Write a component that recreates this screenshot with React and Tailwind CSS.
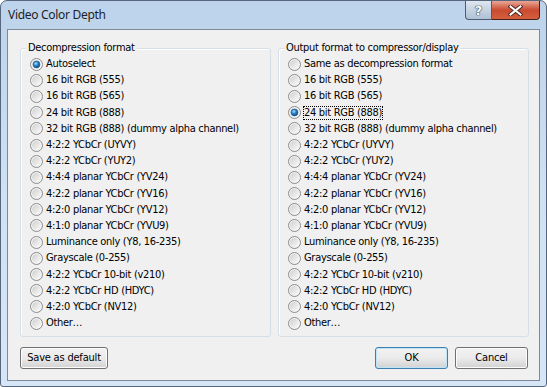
import React from 'react';

const leftItems = [
  'Autoselect',
  '16 bit RGB (555)',
  '16 bit RGB (565)',
  '24 bit RGB (888)',
  '32 bit RGB (888) (dummy alpha channel)',
  '4:2:2 YCbCr (UYVY)',
  '4:2:2 YCbCr (YUY2)',
  '4:4:4 planar YCbCr (YV24)',
  '4:2:2 planar YCbCr (YV16)',
  '4:2:0 planar YCbCr (YV12)',
  '4:1:0 planar YCbCr (YVU9)',
  'Luminance only (Y8, 16-235)',
  'Grayscale (0-255)',
  '4:2:2 YCbCr 10-bit (v210)',
  '4:2:2 YCbCr HD (HDYC)',
  '4:2:0 YCbCr (NV12)',
  'Other…',
];

const rightItems = ['Same as decompression format', ...leftItems.slice(1)];

const font = { fontFamily: '"DejaVu Sans Condensed", "Liberation Sans", sans-serif' };

// classic win7 radio glyph
const Radio = ({ checked }) => (
  <svg width="13" height="13" viewBox="0 0 13 13" className="shrink-0">
    <defs>
      <linearGradient id="rbg" x1="0" y1="0" x2="1" y2="1">
        <stop offset="0" stopColor="#cfcfcf" />
        <stop offset="1" stopColor="#fbfbfb" />
      </linearGradient>
      <radialGradient id="rdot" cx="0.4" cy="0.35" r="0.7">
        <stop offset="0" stopColor="#a8e4ff" />
        <stop offset="0.45" stopColor="#2b87cf" />
        <stop offset="1" stopColor="#0b3a72" />
      </radialGradient>
    </defs>
    <circle cx="6.5" cy="6.5" r="6" fill="#f4f4f4" stroke="#8b8b8b" />
    <circle cx="6.5" cy="6.5" r="4.5" fill="url(#rbg)" />
    {checked && <circle cx="6.5" cy="6.5" r="3.4" fill="url(#rdot)" stroke="#1d4f86" strokeWidth="0.6" />}
  </svg>
);

const GroupBox = ({ title, items, checkedIndex, focusIndex }) => (
  <div className="relative w-[251px] h-[289px] rounded-[3px] border border-[#d5dfe5] shadow-[inset_1px_1px_0_#ffffff]">
    <span className="absolute left-[5px] top-[-8px] px-[2px] bg-[#f0f0f0] leading-[13px]">{title}</span>
    <div className="pt-[7px] pl-[9px] flex flex-col">
      {items.map((label, i) => (
        <div key={label} className="h-[16.2px] flex items-center gap-[2px]">
          <Radio checked={i === checkedIndex} />
          <span
            className={
              i === focusIndex
                ? 'leading-[14px] px-[1px] outline outline-1 outline-dotted outline-black -outline-offset-1'
                : 'leading-[14px] px-[1px]'
            }
          >
            {label}
          </span>
        </div>
      ))}
    </div>
  </div>
);

const Button = ({ children, width, primary }) => (
  <button
    className={
      'h-[22px] rounded-[3px] text-[11px] tracking-[-0.2px] text-black border bg-gradient-to-b from-[#f2f2f2] via-[#ebebeb] to-[#d2d2d2] ' +
      (primary
        ? 'border-[#3c7fb1] shadow-[inset_0_0_0_1px_#bfe4f8] '
        : 'border-[#707070] shadow-[inset_0_0_0_1px_#fcfcfc] ') +
      width
    }
    style={font}
  >
    {children}
  </button>
);

export default function App() {
  return (
    <div className="w-[547px] h-[387px] rounded-t-[7px] rounded-b-[3px] border border-[#56667c] bg-gradient-to-b from-[#bcd3eb] via-[#cfe1f3] to-[#d7e6f6] flex flex-col overflow-hidden">
      {/* title bar */}
      <div className="h-[28px] flex items-start justify-between pl-[7px] pr-[6px]">
        <span
          className="mt-[6px] text-[12px] leading-[16px] tracking-[-0.3px] text-[#1e1e1e]"
          style={{ fontFamily: '"Noto Sans", "Open Sans", sans-serif' }}
        >
          Video Color Depth
        </span>
        <div className="flex">
          <div className="w-[27px] h-[19px] rounded-bl-[4px] border border-t-0 border-[#4d5c6e] bg-gradient-to-b from-[#dfe7f0] via-[#c5d3e2] to-[#b0c2d6] flex items-center justify-center">
            <span
              className="text-[13px] font-bold text-white leading-none [text-shadow:0_0_1px_#2d3a4a,0_0_1px_#2d3a4a,0_0_1px_#2d3a4a]"
              style={{ fontFamily: '"DejaVu Sans", sans-serif' }}
            >
              ?
            </span>
          </div>
          <div className="w-[48px] h-[19px] rounded-br-[4px] border border-t-0 border-l-0 border-[#4a1f18] bg-gradient-to-b from-[#e8a697] via-[#c94a30] to-[#d4603f] flex items-center justify-center">
            <svg width="15" height="11" viewBox="0 0 15 11">
              <path d="M2.5 1.5 L12.5 9.5 M12.5 1.5 L2.5 9.5" stroke="#4a2a22" strokeWidth="4" strokeLinecap="square" />
              <path d="M2.5 1.5 L12.5 9.5 M12.5 1.5 L2.5 9.5" stroke="#ffffff" strokeWidth="2" strokeLinecap="square" />
            </svg>
          </div>
        </div>
      </div>

      {/* client area */}
      <div
        className="mx-[6px] h-[352px] border border-[#7d8a9a] bg-[#f0f0f0] text-[11px] tracking-[-0.3px] text-black"
        style={font}
      >
        <div className="pt-[18px] pl-[12px] pr-[10px] flex gap-[7px]">
          <GroupBox title="Decompression format" items={leftItems} checkedIndex={0} />
          <GroupBox title="Output format to compressor/display" items={rightItems} checkedIndex={3} focusIndex={3} />
        </div>
        <div className="mt-[10px] pl-[12px] pr-[11px] flex justify-between">
          <Button width="w-[88px]">Save as default</Button>
          <div className="flex gap-[7px]">
            <Button width="w-[73px]" primary>OK</Button>
            <Button width="w-[73px]">Cancel</Button>
          </div>
        </div>
      </div>
    </div>
  );
}
